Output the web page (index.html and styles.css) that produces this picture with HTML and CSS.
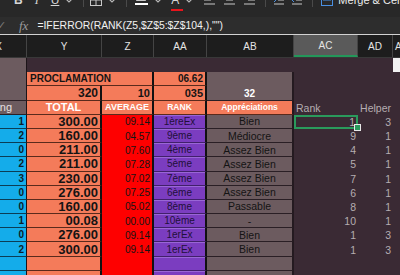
FILE: index.html
```html
<!DOCTYPE html>
<html lang="fr">
<head>
  <meta charset="UTF-8" />
  <meta name="viewport" content="width=device-width, initial-scale=1.0" />
  <title>Proclamation</title>
  <link rel="stylesheet" href="styles.css">
</head>
<body>

  <div class="ribbon">
    <div class="ribbon-row">
      <span class="tb tb-b">B</span>
      <span class="tb tb-i">I</span>
      <span class="tb tb-u">U</span>
      <svg class="caret" width="8" height="5"><polyline points="1,1 4,4 7,1" /></svg>
      <span class="tb-sep"></span>
      <svg class="ico ico-border" width="12" height="12"><rect x="0.5" y="0.5" width="11" height="11" /><line x1="6" y1="0" x2="6" y2="12" /><line x1="0" y1="6" x2="12" y2="6" /></svg>
      <svg class="caret" width="8" height="5"><polyline points="1,1 4,4 7,1" /></svg>
      <span class="tb-sep"></span>
      <svg class="ico ico-fill" width="13" height="14"><path d="M3 2 L9 2 L11 8 L1 8 Z" /><rect class="bar-white" x="0" y="10" width="13" height="2" /></svg>
      <svg class="caret" width="8" height="5"><polyline points="1,1 4,4 7,1" /></svg>
      <span class="tb tb-a">A<i class="bar-red"></i></span>
      <svg class="caret" width="8" height="5"><polyline points="1,1 4,4 7,1" /></svg>
      <svg class="ico ico-align first" width="11" height="10"><line x1="0" y1="1" x2="11" y2="1" /><line x1="0" y1="5" x2="7" y2="5" /><line x1="0" y1="9" x2="11" y2="9" /></svg>
      <svg class="ico ico-align" width="11" height="10"><line x1="0" y1="1" x2="11" y2="1" /><line x1="2" y1="5" x2="9" y2="5" /><line x1="0" y1="9" x2="11" y2="9" /></svg>
      <svg class="ico ico-align" width="11" height="10"><line x1="0" y1="1" x2="11" y2="1" /><line x1="4" y1="5" x2="11" y2="5" /><line x1="0" y1="9" x2="11" y2="9" /></svg>
      <span class="tb-sep"></span>
      <svg class="ico ico-indent" width="10" height="10"><line x1="0" y1="1" x2="10" y2="1" /><line x1="4" y1="5" x2="10" y2="5" /><line x1="0" y1="9" x2="10" y2="9" /><polyline class="blue-arrow" points="0,3 2,5 0,7" /></svg>
      <svg class="ico ico-indent" width="10" height="10"><line x1="0" y1="1" x2="10" y2="1" /><line x1="4" y1="5" x2="10" y2="5" /><line x1="0" y1="9" x2="10" y2="9" /><polyline class="blue-arrow" points="2,3 0,5 2,7" /></svg>
      <span class="tb-sep"></span>
      <svg class="ico ico-merge" width="12" height="12"><rect x="0.5" y="0.5" width="11" height="11" /><line x1="2" y1="6" x2="10" y2="6" /></svg>
      <span class="tb-text">Merge &amp; Centre</span>
      <svg class="caret" width="8" height="5"><polyline points="1,1 4,4 7,1" /></svg>
    </div>
  </div>

  <div class="fbar">
    <span class="fb-check">✓</span>
    <span class="fb-fx">fx</span>
    <span class="fb-formula">=IFERROR(RANK(Z5,$Z$5:$Z$104,),"")</span>
  </div>

  <div class="colhead">
    <div class="h h-x">X</div>
    <div class="h">Y</div>
    <div class="h">Z</div>
    <div class="h">AA</div>
    <div class="h">AB</div>
    <div class="h h-sel">AC</div>
    <div class="h">AD</div>
    <div class="h h-ae">AE</div>
  </div>

  <div class="sheet">
    <!-- rows 1-4 : title block -->
    <div class="c mau blk-x"></div>
    <div class="c"></div><div class="c"></div><div class="c"></div><div class="c"></div><div class="c"></div><div class="c"></div><div class="c ae ae-top"></div>

    <div class="c org y-z title">PROCLAMATION</div>
    <div class="c org aa r b10">06.62</div>
    <div class="c mau blk-ab">32</div>
    <div class="c"></div><div class="c"></div><div class="c ae"></div>

    <div class="c org y r b12">320</div>
    <div class="c org z r b11">10</div>
    <div class="c org aa r b11">035</div>
    <div class="c"></div><div class="c"></div><div class="c ae"></div>

    <div class="c mau x rang">Rang</div>
    <div class="c org y m hd hd-total">TOTAL</div>
    <div class="c org z m hd hd-avg">AVERAGE</div>
    <div class="c org aa m hd hd-sm">RANK</div>
    <div class="c org ab m hd hd-sm">Appréciations</div>
    <div class="c gr">Rank</div>
    <div class="c gr r">Helper</div>
    <div class="c ae"></div>

    <!-- data rows -->
    <div class="c blue x r">1</div><div class="c org y r num">300.00</div><div class="c red z r">09.14</div><div class="c pur aa m">1èreEx</div><div class="c mau ab m">Bien</div><div class="c gr r sel">1</div><div class="c gr r">3</div><div class="c ae"></div>
    <div class="c blue x r">2</div><div class="c org y r num">160.00</div><div class="c red z r">04.57</div><div class="c pur aa m">9ème</div><div class="c mau ab m">Médiocre</div><div class="c gr r">9</div><div class="c gr r">1</div><div class="c ae"></div>
    <div class="c blue x r">0</div><div class="c org y r num">211.00</div><div class="c red z r">07.60</div><div class="c pur aa m">4ème</div><div class="c mau ab m">Assez Bien</div><div class="c gr r">4</div><div class="c gr r">1</div><div class="c ae"></div>
    <div class="c blue x r">2</div><div class="c org y r num">211.00</div><div class="c red z r">07.28</div><div class="c pur aa m">5ème</div><div class="c mau ab m">Assez Bien</div><div class="c gr r">5</div><div class="c gr r">1</div><div class="c ae"></div>
    <div class="c blue x r">3</div><div class="c org y r num">230.00</div><div class="c red z r">07.02</div><div class="c pur aa m">7ème</div><div class="c mau ab m">Assez Bien</div><div class="c gr r">7</div><div class="c gr r">1</div><div class="c ae"></div>
    <div class="c blue x r">0</div><div class="c org y r num">276.00</div><div class="c red z r">07.25</div><div class="c pur aa m">6ème</div><div class="c mau ab m">Assez Bien</div><div class="c gr r">6</div><div class="c gr r">1</div><div class="c ae"></div>
    <div class="c blue x r">0</div><div class="c org y r num">160.00</div><div class="c red z r">05.02</div><div class="c pur aa m">8ème</div><div class="c mau ab m">Passable</div><div class="c gr r">8</div><div class="c gr r">1</div><div class="c ae"></div>
    <div class="c blue x r">1</div><div class="c org y r num">00.08</div><div class="c red z r">00.00</div><div class="c pur aa m">10ème</div><div class="c mau ab m">-</div><div class="c gr r">10</div><div class="c gr r">1</div><div class="c ae"></div>
    <div class="c blue x r">0</div><div class="c org y r num">276.00</div><div class="c red z r">09.14</div><div class="c pur aa m">1erEx</div><div class="c mau ab m">Bien</div><div class="c gr r">1</div><div class="c gr r">3</div><div class="c ae"></div>
    <div class="c blue x r">2</div><div class="c org y r num">300.00</div><div class="c red z r">09.14</div><div class="c pur aa m">1erEx</div><div class="c mau ab m">Bien</div><div class="c gr r">1</div><div class="c gr r">3</div><div class="c ae"></div>

    <!-- empty formatted rows -->
    <div class="c blue x"></div><div class="c org y"></div><div class="c red z"></div><div class="c pur aa"></div><div class="c mau ab"></div><div class="c"></div><div class="c"></div><div class="c ae"></div>
    <div class="c blue x"></div><div class="c org y"></div><div class="c red z"></div><div class="c pur aa"></div><div class="c mau ab"></div><div class="c"></div><div class="c"></div><div class="c ae"></div>
  </div>

</body>
</html>
```

FILE: styles.css
```css
* {
  box-sizing: border-box;
}
html, body {
  margin: 0;
}
body {
  width: 400px;
  height: 275px;
  overflow: hidden;
  background-color: #3a2a34;
  font-family: "Liberation Sans", Arial, sans-serif;
  --cols: 27px 75px 52px 53px 87px 64px 35px 7px;
}

/* ribbon (only its lower edge is visible) */
.ribbon {
  height: 17px;
  background-color: #282828;
  overflow: hidden;
}
.ribbon-row {
  display: flex;
  align-items: center;
  height: 12px;
  margin-top: -6px;
  padding-left: 14px;
  color: #d6d6d6;
  white-space: nowrap;
}
.tb {
  font-size: 12px;
  line-height: 12px;
}
.tb-b { font-weight: bold; }
.tb-i { font-style: italic; margin-left: 12px; font-family: "Liberation Serif", serif; }
.tb-u { text-decoration: underline; margin-left: 12px; }
.tb-a {
  position: relative;
  margin-left: 9px;
  width: 12px;
  text-align: center;
}
.bar-red {
  position: absolute;
  left: 0;
  bottom: -5px;
  width: 12px;
  height: 2px;
  background-color: #e8141c;
}
.caret {
  flex: none;
  margin-left: 6px;
  fill: none;
  stroke: #b8b8b8;
  stroke-width: 1.2;
}
.tb-sep {
  flex: none;
  width: 1px;
  height: 14px;
  margin-left: 10px;
  background-color: #4a4a4a;
}
.ico {
  flex: none;
  margin-left: 6px;
  fill: none;
  stroke: #c8c8c8;
  stroke-width: 1;
}
.ico-fill { margin-left: 8px; }
.ico-fill path { fill: #c8c8c8; stroke: none; }
.bar-white { fill: #ffffff; stroke: none; }
.ico-align { margin-left: 9px; }
.ico-align.first { margin-left: 11px; }
.ico-indent { margin-left: 8px; }
.blue-arrow { stroke: #4a90e2; }
.ico-merge { margin-left: 8px; stroke: #4a90e2; }
.tb-text {
  flex: none;
  margin-left: 5px;
  font-size: 11px;
  color: #ececec;
}

/* formula bar */
.fbar {
  height: 18px;
  display: flex;
  align-items: center;
  background-color: #2d2d2d;
  border-bottom: 1px solid #d2d2d2;
  white-space: nowrap;
}
.fb-check {
  margin-left: -3px;
  width: 10px;
  font-size: 11px;
  color: #7a7a7a;
}
.fb-fx {
  margin-left: 12px;
  font-family: "Liberation Serif", serif;
  font-style: italic;
  font-size: 13px;
  color: #9c9c9c;
}
.fb-formula {
  margin-left: 9px;
  font-size: 10.4px;
  color: #f2f2f2;
}

/* column headers */
.colhead {
  display: grid;
  grid-template-columns: var(--cols);
  height: 23px;
  background-color: #1d1d1d;
  border-bottom: 1px solid #383838;
}
.h {
  display: flex;
  align-items: center;
  justify-content: center;
  font-size: 10px;
  color: #e4e4e4;
  border-right: 1px solid #444;
  overflow: hidden;
}
.h-x {
  justify-content: flex-end;
  padding-right: 24px;
}
.h-sel {
  background-color: #5a5a5a;
  border-bottom: 2px solid #23975a;
}
.h-ae {
  justify-content: flex-start;
  padding-left: 2px;
  border-right: none;
}

/* sheet */
.sheet {
  display: grid;
  grid-template-columns: var(--cols);
  grid-auto-rows: 14.2px;
}
.c {
  display: flex;
  align-items: center;
  padding: 0 2px;
  font-size: 10.5px;
  white-space: nowrap;
  overflow: hidden;
  color: #141414;
}
.r { justify-content: flex-end; }
.m { justify-content: center; }

.blue {
  background-color: #14acea;
  border-bottom: 1px solid #0b3d55;
  font-weight: bold;
  font-size: 10px;
  color: #0b1e2b;
}
.org {
  background-color: #f47b5a;
  border-bottom: 1px solid #5a2a1c;
}
.red {
  background-color: #fe0000;
  font-size: 10px;
}
.pur {
  background-color: #7b3dc0;
  border-bottom: 1px solid #41206b;
  box-shadow: inset 0 1px 0 #9966d6;
  font-size: 10px;
  color: #21103a;
}
.mau {
  background-color: #6c5b5f;
  border-bottom: 1px solid #2a1f25;
}
.x { border-right: 1px solid #1c1418; }
.y, .z, .aa { border-right: 2px solid #111; }
.ab { border-right: 2px solid #241a20; }
.gr { color: #b5adb1; }
.ae { padding: 0; }
.ae-top { background-color: #f2f2f2; }

.blk-x {
  grid-row: span 3;
  border-right: 1px solid #1c1418;
}
.y-z {
  grid-column: span 2;
  border-right: 2px solid #111;
}
.title {
  padding-left: 3px;
  font-size: 10px;
  font-weight: bold;
}
.blk-ab {
  grid-row: span 2;
  justify-content: center;
  align-items: flex-end;
  padding-bottom: 1px;
  border-right: 2px solid #241a20;
  font-size: 10px;
  font-weight: bold;
  color: #ffffff;
}
.b10 { font-size: 10px; font-weight: bold; }
.b11 { font-size: 11px; font-weight: bold; }
.b12 { font-size: 12px; font-weight: bold; }
.num {
  font-size: 13px;
  font-weight: bold;
}
.rang {
  justify-content: flex-end;
  padding-right: 14px;
  font-size: 11px;
  color: #e6e0e2;
}
.hd {
  font-weight: bold;
  color: #ffffff;
}
.hd-total { font-size: 11px; }
.hd-avg { font-size: 9px; }
.hd-sm { font-size: 8.5px; }

/* active cell */
.sel {
  position: relative;
  overflow: visible;
  box-shadow: inset 0 0 0 2px #2a9a5c;
  padding-right: 3px;
}
.sel::after {
  content: "";
  position: absolute;
  right: -3px;
  bottom: -2px;
  width: 5px;
  height: 5px;
  background-color: #2a9a5c;
  border: 1px solid #e8e8e8;
}
```
